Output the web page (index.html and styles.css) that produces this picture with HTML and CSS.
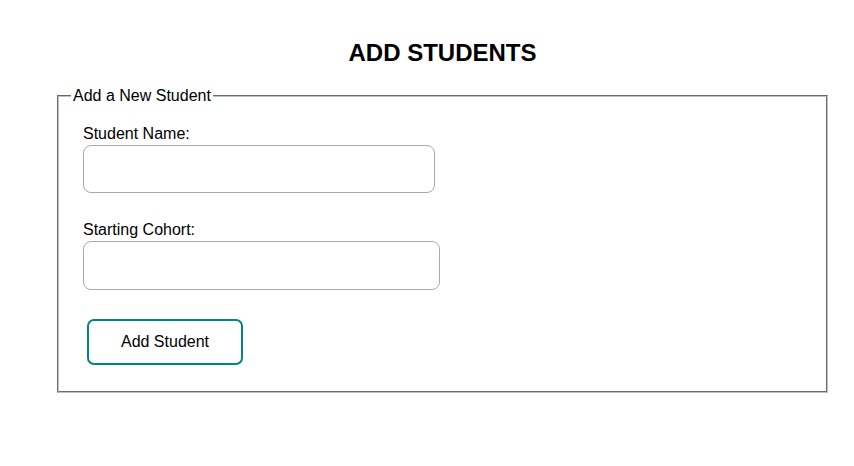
FILE: index.html
```html
<!DOCTYPE html>
<html lang="en">
<head>
<meta charset="utf-8">
<title>Add Students</title>
<link rel="stylesheet" href="styles.css">
</head>
<body>
<main class="page">
  <h1 class="title">ADD STUDENTS</h1>
  <fieldset class="panel">
    <legend class="panel-legend">Add a New Student</legend>
    <form class="student-form">
      <div class="field">
        <label class="field-label" for="name">Student Name:</label>
        <input class="field-input field-input--name" id="name" type="text">
      </div>
      <div class="field">
        <label class="field-label" for="cohort">Starting Cohort:</label>
        <input class="field-input field-input--cohort" id="cohort" type="text">
      </div>
      <button class="submit-btn" type="button">Add Student</button>
    </form>
  </fieldset>
</main>
</body>
</html>
```

FILE: styles.css
```css
html, body {
  margin: 0;
  padding: 0;
  background: #fff;
}
body {
  padding: 8px;
  font-family: "Liberation Sans", Arial, sans-serif;
  font-size: 16px;
  color: #000;
}
.page {
  margin: 0 18px 0 49px;
}
.title {
  margin: 31px 0 20px;
  text-align: center;
  font-size: 24px;
  font-weight: bold;
  line-height: 27.6px;
}
.panel {
  margin: 0;
  padding: 0 12px 26px;
  border: 2px groove #c0c0c0;
}
.panel-legend {
  padding: 0 2px;
  line-height: 18px;
}
.student-form {
  display: flex;
  flex-direction: column;
  align-items: flex-start;
  padding: 20px 12px 0;
}
.field {
  display: flex;
  flex-direction: column;
  margin-bottom: 28px;
}
.field-label {
  line-height: 18px;
  margin-bottom: 2px;
}
.field-input {
  box-sizing: border-box;
  border: 1px solid #a9a9a9;
  border-radius: 8px;
  padding: 0 8px;
  font: inherit;
  background: #fff;
}
.field-input--name {
  width: 352px;
  height: 48px;
}
.field-input--cohort {
  width: 357px;
  height: 49px;
}
.submit-btn {
  box-sizing: border-box;
  margin: 1px 0 0 4px;
  width: 156px;
  height: 46px;
  border: 2px solid #00857f;
  border-radius: 7px;
  background: #fff;
  font: inherit;
  color: #000;
  cursor: pointer;
}
```
